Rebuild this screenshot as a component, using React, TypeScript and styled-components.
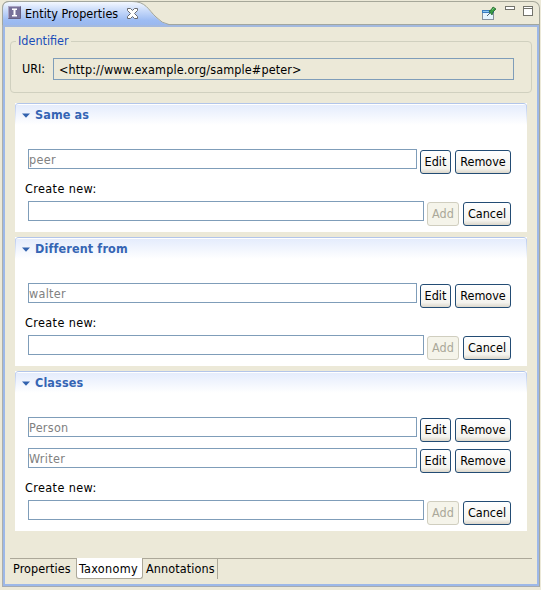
import React from 'react';
import styled, { createGlobalStyle } from 'styled-components';

const GlobalStyle = createGlobalStyle`
  * { box-sizing: border-box; }
  body {
    margin: 0;
    background: #ece9d8;
    color: #000;
    font: 12.5px/16px "DejaVu Sans Condensed", "DejaVu Sans", sans-serif;
    font-stretch: condensed;
  }
`;

const Page = styled.div`
  width: 541px;
  height: 590px;
  padding: 1px 1px 3px 2px;
  overflow: hidden;
`;

const View = styled.main`
  width: 538px;
  height: 586px;
  display: flex;
  flex-direction: column;
  border: 1px solid #a6a799;
  border-left-color: #aaaead;
  border-bottom-color: #a5abb2;
  border-radius: 7px 7px 0 0;
`;

const TitleBar = styled.header`
  height: 23px;
  flex: none;
  display: flex;
  justify-content: space-between;
  align-items: flex-start;
  border-bottom: 1px solid #a1a69f;
`;

const TitleTab = styled.div`
  position: relative;
  display: flex;
  align-items: flex-start;
  width: 170px;
  height: 22px;
  padding: 4px 0 0 5px;
`;

const TabShape = styled.svg`
  position: absolute;
  left: -1px;
  top: -1px;
`;

const TypeIcon = styled.svg`
  position: relative;
  flex: none;
`;

const CloseIcon = styled.svg`
  position: relative;
  flex: none;
  margin: 2px 0 0 9px;
`;

const Text = styled.span<{ $w: number }>`
  display: inline-block;
  position: relative;
  flex: none;
  width: ${p => p.$w}px;
  white-space: nowrap;
`;

const TitleText = styled(Text)`
  margin: 0 0 0 4px;
`;

const Tools = styled.div`
  display: flex;
  align-items: flex-start;
  padding: 4px 5px 0 0;
`;

const Body = styled.div`
  flex: 1;
  display: flex;
  flex-direction: column;
  border: 2px solid #9db8e8;
  border-top-color: #a3b9df;
  padding: 6px 4px 5px 5px;
`;

const Group = styled.fieldset`
  width: 522px;
  height: 60px;
  margin: 0;
  padding: 9px 0 0 11px;
  min-width: 0;
  border: 1px solid #d0d0bf;
  border-radius: 4px;
`;

const Legend = styled.legend`
  margin-left: -6px;
  padding: 0 2px;
  height: 16px;
  color: #1a4cb8;
`;

const UriRow = styled.div`
  display: flex;
  align-items: center;
`;

const UriField = styled.div`
  width: 461px;
  height: 22px;
  margin-left: 4px;
  padding: 3px 5px 1px;
  border: 1px solid #7f9db9;
  letter-spacing: 0.13px;
`;

const Sections = styled.div`
  display: flex;
  flex-direction: column;
  gap: 5px;
  margin: 10px 0 0 5px;
`;

const Panel = styled.section`
  width: 512px;
  padding-bottom: 6px;
  background: #fff;
`;

const PanelHeader = styled.h2`
  height: 22px;
  margin: 0 0 24px;
  padding: 3px 0 0 6px;
  display: flex;
  align-items: flex-start;
  background:
    linear-gradient(#b7c9ee, #fff) left / 1px 100% no-repeat,
    linear-gradient(#b7c9ee, #fff) right / 1px 100% no-repeat,
    linear-gradient(#fff, #fff) 0 0 / 100% 1px no-repeat,
    linear-gradient(#e3ebfc, #fff);
  border-top: 1px solid #b2c5ea;
  border-radius: 4px 4px 0 0;
  color: #3565b4;
  font-size: 12.5px;
  line-height: 16px;
  font-weight: bold;
  letter-spacing: 0.13px;
`;

const Twistie = styled.svg`
  margin: 6px 5px 0 1px;
  flex: none;
`;

const Row = styled.div`
  display: flex;
  align-items: flex-start;
  height: 25px;
  margin-left: 13px;
  & + & { margin-top: 6px; }
`;

const Field = styled.input<{ $w: number }>`
  width: ${p => p.$w}px;
  height: 20px;
  flex: none;
  margin: 0 3px 0 0;
  padding: 1px 0 0;
  border: 1px solid #7f9db9;
  border-radius: 0;
  background: #fff;
  color: #818181;
  font: inherit;
  letter-spacing: 0.3px;
  outline: none;
`;

const Button = styled.button<{ $w: number }>`
  width: ${p => p.$w}px;
  height: 24px;
  flex: none;
  margin: 1px 4px 0 0;
  padding: 0;
  border: 1px solid #234c74;
  border-radius: 3px;
  background: linear-gradient(#fff, #f4f3ee 80%, #dcd7cb);
  color: #000;
  font: inherit;
  text-align: center;
  white-space: nowrap;
  &:disabled {
    border-color: #d0cebf;
    background: #f5f4ea;
    color: #aaa899;
  }
`;

const CreateLabel = styled.div`
  height: 16px;
  margin: 7px 0 4px 10px;
  letter-spacing: 0.4px;
`;

const BottomTabs = styled.nav`
  display: flex;
  width: 522px;
  height: 21px;
  margin-top: auto;
  border-top: 1px solid #aca899;
`;

const BottomTab = styled.div<{ $w: number; $active?: boolean }>`
  width: ${p => p.$w}px;
  height: ${p => (p.$active ? 21 : 20)}px;
  margin-top: ${p => (p.$active ? -1 : 0)}px;
  padding: ${p => (p.$active ? '3px 0 0 2px' : '2px 0 0 3px')};
  white-space: nowrap;
  letter-spacing: ${p => (p.$active ? 0.3 : 0.1)}px;
  background: ${p => (p.$active ? '#fff' : 'transparent')};
  border: solid #aca899;
  border-width: ${p => (p.$active ? '0 1px 1px' : '0')};
  border-radius: ${p => (p.$active ? '0 0 3px 3px' : '0')};
  &:last-child { border-right-width: 1px; }
`;

interface SectionProps {
  title: string;
  values: string[];
}

function Section({ title, values }: SectionProps) {
  return (
    <Panel>
      <PanelHeader>
        <Twistie width="8" height="5" viewBox="0 0 8 5">
          <path d="M0 0.5H8L4 4.8Z" fill="#3262ae" />
        </Twistie>
        {title}
      </PanelHeader>
      {values.map(value => (
        <Row key={value}>
          <Field $w={389} defaultValue={value} readOnly />
          <Button $w={31}>Edit</Button>
          <Button $w={56}>Remove</Button>
        </Row>
      ))}
      <CreateLabel>Create new:</CreateLabel>
      <Row>
        <Field $w={396} />
        <Button $w={32} disabled>Add</Button>
        <Button $w={48}>Cancel</Button>
      </Row>
    </Panel>
  );
}

export default function App() {
  return (
    <Page>
      <GlobalStyle />
      <View>
        <TitleBar>
          <TitleTab>
            <TabShape width="172" height="24" viewBox="0 0 172 24">
              <defs>
                <linearGradient id="tabFill" x1="0" y1="0" x2="0" y2="1">
                  <stop offset="0" stopColor="#f4f8ff" />
                  <stop offset="0.35" stopColor="#cbdcfa" />
                  <stop offset="0.8" stopColor="#9dbcf3" />
                  <stop offset="1" stopColor="#9ab8ee" />
                </linearGradient>
              </defs>
              <path d="M1 24V7Q1 1 7 1H130C144 1 146 9 154 16.5Q160 22.5 167 23.5V24Z" fill="url(#tabFill)" />
              <path d="M.5 24V7Q.5 .5 7 .5H130C144 .5 146 8.5 154 16Q160 22.5 167 23.5H172" fill="none" stroke="#a1a69f" />
            </TabShape>
            <TypeIcon width="13" height="13" viewBox="0 0 13 13">
              <rect width="13" height="13" rx="1" fill="#666084" />
              <rect x="0" y="0" width="12" height="12" fill="#aaa5c3" />
              <rect x="1" y="1" width="11" height="11" fill="#77719a" />
              <path d="M4 2.5H9V4H7.5V9H9V10.5H4V9H5.5V4H4Z" fill="#fff" />
            </TypeIcon>
            <TitleText $w={93}>Entity Properties</TitleText>
            <CloseIcon width="11" height="11" viewBox="0 0 11 11">
              <path d="M.5 .5H3.5L5.5 2.5 7.5 .5H10.5V2.5L7.5 5.5 10.5 8.5V10.5H7.5L5.5 8.5 3.5 10.5H.5V8.5L3.5 5.5 .5 2.5Z" fill="#fff" stroke="#686b70" />
            </CloseIcon>
          </TitleTab>
          <Tools>
            <svg width="52" height="16" viewBox="0 0 52 16">
              <rect x=".5" y="4.5" width="11" height="9" fill="#e5f4ff" stroke="#86919d" />
              <path d="M0 4H12V7H0Z" fill="#397bc0" />
              <path d="M1 5H7V6H1Z" fill="#8bc8f2" />
              <path d="M5 10L8 7" stroke="#54646d" />
              <path d="M7 5L9 4 11 1 14 3 11 6 10 9Z" fill="#399d45" stroke="#24682e" strokeWidth=".8" />
              <path d="M10 4L12 2" stroke="#76ca76" />
              <rect x="23.5" y=".5" width="9" height="3" fill="#fff" stroke="#73736b" />
              <rect x="41.5" y=".5" width="9" height="9" fill="#fff" stroke="#73736b" />
              <path d="M42 2.5H50" stroke="#73736b" />
            </svg>
          </Tools>
        </TitleBar>
        <Body>
          <Group>
            <Legend>Identifier</Legend>
            <UriRow>
              <Text $w={27}>URI:</Text>
              <UriField>&lt;http://www.example.org/sample#peter&gt;</UriField>
            </UriRow>
          </Group>
          <Sections>
            <Section title="Same as" values={['peer']} />
            <Section title="Different from" values={['walter']} />
            <Section title="Classes" values={['Person', 'Writer']} />
          </Sections>
          <BottomTabs>
            <BottomTab $w={66}>Properties</BottomTab>
            <BottomTab $w={67} $active>Taxonomy</BottomTab>
            <BottomTab $w={75}>Annotations</BottomTab>
          </BottomTabs>
        </Body>
      </View>
    </Page>
  );
}
